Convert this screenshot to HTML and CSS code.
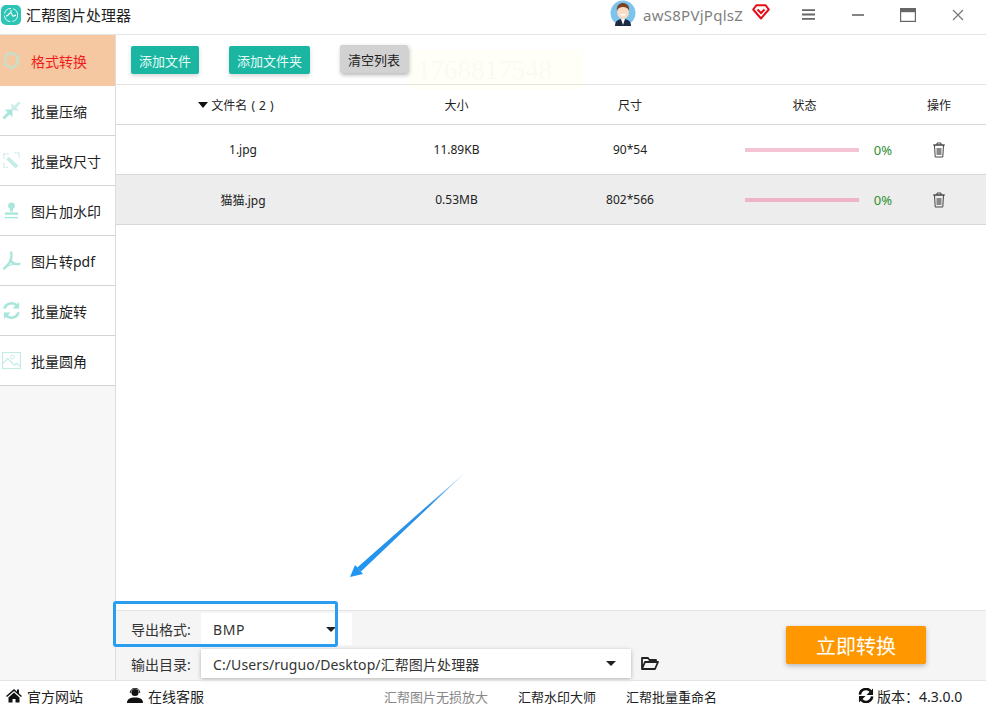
FILE: index.html
```html
<!DOCTYPE html>
<html lang="zh-CN">
<head>
<meta charset="utf-8">
<title>汇帮图片处理器</title>
<link rel="stylesheet" href="styles.css">
</head>
<body>
<div class="app">
  <header class="titlebar">
    <svg class="logo" viewBox="0 0 20 20"><rect width="20" height="20" rx="5" fill="#2cc4b4"/><circle cx="10" cy="10" r="6.6" fill="none" stroke="#e6fbf8" stroke-width="1" stroke-dasharray="9 2"/><path d="M5 11c3 0 3-4 5-3s0 5 5 2M10 5v3" fill="none" stroke="#fff" stroke-width="1.1"/></svg>
    <span class="app-name">汇帮图片处理器</span>
    <div class="title-right">
      <svg class="avatar" viewBox="0 0 26 26"><circle cx="13" cy="13" r="12.5" fill="#7cc4ee"/><path d="M5 26c0-5 3-7 8-7s8 2 8 7z" fill="#1d2a44"/><path d="M11 19h4l-2 6z" fill="#fff"/><ellipse cx="13" cy="12" rx="6" ry="7" fill="#fbdcc4"/><path d="M7 11c-1-6 3-8 6-8s7 2 6 8c-1-3-3-4-6-4s-5 1-6 4z" fill="#7a4526"/><path d="M10 14c1 2 5 2 6 0z" fill="#fff"/></svg>
      <span class="user-name">awS8PVjPqlsZ</span>
      <svg class="vip" viewBox="0 0 18 16"><path d="M4.500 1.200h9l3.300 4.300L9 14.500 1.200 5.500z" fill="none" stroke="#e60d18" stroke-width="2" stroke-linejoin="round"/><path d="M5.500 5.500 9 9l3.500-3.500" fill="none" stroke="#e60d18" stroke-width="2"/></svg>
      <svg class="win-menu" viewBox="0 0 13 11"><path d="M0 1.200h13M0 5.500h13M0 9.800h13" stroke="#666" stroke-width="1.800"/></svg>
      <svg class="win-min" viewBox="0 0 12 2"><path d="M0 1h12" stroke="#777" stroke-width="1.800"/></svg>
      <svg class="win-max" viewBox="0 0 16 14"><rect x=".6" y=".6" width="14.800" height="12.800" fill="none" stroke="#666" stroke-width="1.200"/><rect x=".6" y=".6" width="14.800" height="3.600" fill="#666"/></svg>
      <svg class="win-close" viewBox="0 0 12 12"><path d="M1 1l10 10M11 1 1 11" stroke="#777" stroke-width="1.200"/></svg>
    </div>
  </header>

  <div class="main">
    <nav class="sidebar">
      <div class="nav-item active">
        <svg class="nav-icon" viewBox="0 0 20 20"><path d="M4 4l6-2 7 4-1 8-6 4-7-4z" fill="none" stroke="#bfe3cf" stroke-width="3" stroke-dasharray="3 1"/></svg>
        <span>格式转换</span>
      </div>
      <div class="nav-item">
        <svg class="nav-icon" viewBox="0 0 20 20"><path d="M1.500 18.500l6-6" stroke="#a8e6dc" stroke-width="3"/><path d="M3 9h8v8z" fill="#a8e6dc"/><path d="M13 7l5.500-5.500" stroke="#cdeee8" stroke-width="3"/><path d="M10 2v8h8z" fill="#cdeee8"/></svg>
        <span>批量压缩</span>
      </div>
      <div class="nav-item">
        <svg class="nav-icon" viewBox="0 0 20 20"><path d="M7 6l10 9-2.500 3.500L4.500 9z" fill="#c4ece5"/><path d="M2 3h5M2 3v5M13 2h5v5M2 13v4h4" fill="none" stroke="#c4ece5" stroke-width="1.500" stroke-dasharray="2 1"/></svg>
        <span>批量改尺寸</span>
      </div>
      <div class="nav-item">
        <svg class="nav-icon" viewBox="0 0 20 20"><circle cx="10" cy="5" r="3.500" fill="#a8e6dc"/><path d="M8.500 7h3v4h-3zM3 12h14v2.500H3z" fill="#a8e6dc"/><path d="M3 17.500h14" stroke="#a8e6dc" stroke-width="1.500"/></svg>
        <span>图片加水印</span>
      </div>
      <div class="nav-item">
        <svg class="nav-icon" viewBox="0 0 20 20"><path d="M9.500 1.500c1.500 5 0 11-7.500 17M8.500 9.500c2.500 3.500 6 5 10 4" fill="none" stroke="#a8e6dc" stroke-width="2.400" stroke-linecap="round"/><path d="M3 18c3-3 10-5 15.500-4.500" fill="none" stroke="#a8e6dc" stroke-width="1.200"/></svg>
        <span>图片转pdf</span>
      </div>
      <div class="nav-item">
        <svg class="nav-icon" viewBox="0 0 20 20"><path d="M2.500 8A8 8 0 0 1 16 5M17.500 12A8 8 0 0 1 4 15" fill="none" stroke="#a8e6dc" stroke-width="2.800"/><path d="M18 1v7h-7zM2 19v-7h7z" fill="#a8e6dc"/></svg>
        <span>批量旋转</span>
      </div>
      <div class="nav-item">
        <svg class="nav-icon" viewBox="0 0 20 18"><rect x=".6" y=".6" width="18.800" height="16.800" fill="none" stroke="#c4ece5" stroke-width="1.200"/><circle cx="11" cy="5.500" r="2" fill="none" stroke="#c4ece5"/><path d="M1 12l5-5 7 7 2-2 4 3" fill="none" stroke="#c4ece5" stroke-width="1.200"/></svg>
        <span>批量圆角</span>
      </div>
    </nav>

    <section class="content">
      <div class="toolbar">
        <button class="btn btn-teal">添加文件</button>
        <button class="btn btn-teal">添加文件夹</button>
        <button class="btn btn-grey">清空列表</button>
      </div>
      <div class="row head">
        <div class="cell name-head"><span class="sort"></span>文件名 ( 2 )</div>
        <div class="cell">大小</div>
        <div class="cell">尺寸</div>
        <div class="cell">状态</div>
        <div class="cell">操作</div>
      </div>
      <div class="row">
        <div class="cell">1.jpg</div>
        <div class="cell">11.89KB</div>
        <div class="cell">90*54</div>
        <div class="cell status"><span class="bar"></span><span class="pct">0%</span></div>
        <div class="cell">
          <svg class="trash" viewBox="0 0 14 16"><path d="M1 3h12M5 3V1h4v2M2.500 3l.7 12h7.600l.7-12z" fill="none" stroke="#444" stroke-width="1"/><rect x="4.500" y="6" width="5" height="7" fill="#888"/></svg>
        </div>
      </div>
      <div class="row selected">
        <div class="cell">猫猫.jpg</div>
        <div class="cell">0.53MB</div>
        <div class="cell">802*566</div>
        <div class="cell status"><span class="bar"></span><span class="pct">0%</span></div>
        <div class="cell">
          <svg class="trash" viewBox="0 0 14 16"><path d="M1 3h12M5 3V1h4v2M2.500 3l.7 12h7.600l.7-12z" fill="none" stroke="#444" stroke-width="1"/><rect x="4.500" y="6" width="5" height="7" fill="#888"/></svg>
        </div>
      </div>
      <div class="spacer"></div>
      <div class="panel">
        <div class="options">
          <div class="field">
            <label class="field-label">导出格式:</label>
            <div class="select select-format"><span class="format-value">BMP</span><i class="caret"></i></div>
          </div>
          <div class="field">
            <label class="field-label">输出目录:</label>
            <div class="select select-path"><span class="path-value">C:/Users/ruguo/Desktop/汇帮图片处理器</span><i class="caret"></i></div>
            <svg class="folder" viewBox="0 0 18 15"><path d="M1 13V2h6l1.500 2H15v2M1 13l3-7h13l-3 7z" fill="none" stroke="#222" stroke-width="1.800" stroke-linejoin="round"/></svg>
          </div>
        </div>
        <button class="start">立即转换</button>
      </div>
    </section>
  </div>

  <footer class="footer">
    <div class="foot-link home">
      <svg class="foot-icon" viewBox="0 0 16 14"><path d="M8 .5 0 7.500l1 1L8 2.500l7 6 1-1-3-2.600V1h-2v2.200zM2.500 9v5h4v-3.500h3V14h4V9L8 4z" fill="#111"/></svg>
      <span>官方网站</span>
    </div>
    <div class="foot-link service">
      <svg class="foot-icon" viewBox="0 0 16 15"><circle cx="8" cy="4.500" r="3.600" fill="#111"/><path d="M3.200 5a4.800 4.800 0 0 1 9.600 0" fill="none" stroke="#111"/><path d="M0 15c0-4 3-5.500 8-5.500s8 1.500 8 5.500z" fill="#111"/></svg>
      <span>在线客服</span>
    </div>
    <span class="foot-text muted">汇帮图片无损放大</span>
    <span class="foot-text water">汇帮水印大师</span>
    <span class="foot-text rename">汇帮批量重命名</span>
    <div class="foot-link version">
      <svg class="foot-icon" viewBox="0 0 16 16"><path d="M1.500 7A6.500 6.500 0 0 1 13 3.500M14.500 9A6.500 6.500 0 0 1 3 12.500" fill="none" stroke="#111" stroke-width="2.800"/><path d="M15.500 .5V7.500H8.500zM.5 15.500V8.500h7z" fill="#111"/></svg>
      <span>版本：4.3.0.0</span>
    </div>
  </footer>

  <div class="watermark">1768817548</div>
  <div class="highlight"></div>
  <svg class="arrow" viewBox="0 0 130 120">
    <defs><linearGradient id="shaft" x1="1" y1="0" x2="0" y2="1"><stop offset="0" stop-color="#2d9cf0" stop-opacity=".1"/><stop offset=".35" stop-color="#2d8fe0"/><stop offset="1" stop-color="#2196f3"/></linearGradient></defs>
    <path d="M129 1 21 103.500 17.300 99.500z" fill="url(#shaft)"/>
    <path d="M10 109 15 97l2.500 2.500 3.500 4 2 2.500z" fill="#2196f3"/>
  </svg>
</div>
</body>
</html>
```

FILE: styles.css
```css
* { box-sizing: border-box; }
html, body { margin: 0; padding: 0; }
body {
  font-family: "Noto Sans", "Noto Sans CJK SC", sans-serif;
  font-size: 13px;
  color: #222;
  background: #fff;
}
.app {
  position: relative;
  width: 986px;
  height: 709px;
  display: flex;
  flex-direction: column;
  overflow: hidden;
}
.titlebar {
  height: 35px;
  flex: none;
  display: flex;
  align-items: center;
  padding: 0 22px 5px 1px;
  border-bottom: 1px solid #e4e4e4;
}
.logo { width: 20px; height: 20px; margin-right: 5px; }
.app-name { font-size: 15px; color: #222; }
.title-right { margin-left: auto; display: flex; align-items: center; }
.avatar { width: 26px; height: 26px; margin-right: 7px; margin-top: -3px; }
.user-name { font-size: 15px; color: #808080; width: 109px; letter-spacing: .27px; }
.vip { width: 18px; height: 16px; margin-top: -5px; }
.win-menu { width: 13px; height: 11px; margin-left: 32px; }
.win-min { width: 12px; height: 2px; margin-left: 37px; }
.win-max { width: 16px; height: 14px; margin-left: 36px; }
.win-close { width: 12px; height: 12px; margin-left: 36px; }

.main { flex: 1; display: flex; min-height: 0; }
.sidebar {
  width: 116px;
  flex: none;
  background: #f7f7f7;
  border-right: 1px solid #dcdcdc;
}
.nav-item {
  height: 50px;
  display: flex;
  align-items: center;
  gap: 10px;
  padding-left: 2px;
  background: #fff;
  border-bottom: 1px solid #d4d4d4;
  font-size: 14px;
  color: #222;
}
.nav-item.active {
  height: 51px;
  background: #f6c8a2;
  color: #ee1c1c;
  border-bottom: 0;
}
.nav-icon { width: 19px; height: 19px; flex: none; }

.content { flex: 1; min-width: 0; display: flex; flex-direction: column; }
.toolbar {
  height: 50px;
  flex: none;
  display: flex;
  align-items: flex-start;
  padding: 11px 0 0 15px;
  gap: 30px;
  border-bottom: 1px solid #e2e2e2;
}
.btn {
  height: 28px;
  padding: 0 8px;
  border: 0;
  border-radius: 2px;
  font-family: inherit;
  font-size: 13px;
  box-shadow: 0 2px 4px rgba(0, 0, 0, .16);
}
.btn-teal { background: #1ab6a2; color: #e8fbf7; }
.btn-grey { background: #d2d2d2; color: #222; margin-top: -1px; box-shadow: 1px 2px 4px rgba(0, 0, 0, .3); }

.row {
  height: 50px;
  flex: none;
  display: grid;
  grid-template-columns: 254px 173px 174px 175px 94px;
  align-items: center;
  border-bottom: 1px solid #d8d8d8;
  font-size: 12px;
  color: #222;
}
.row.head { height: 40px; }
.row.selected { background: #ededed; }
.cell { display: flex; justify-content: center; align-items: center; }
.name-head { padding-right: 14px; word-spacing: 1px; }
.sort {
  width: 0;
  height: 0;
  margin-right: 3px;
  border-left: 5px solid transparent;
  border-right: 5px solid transparent;
  border-top: 6px solid #111;
}
.status { justify-content: flex-start; padding-left: 28px; }
.bar { width: 114px; height: 4px; background: #f5c4d4; }
.selected .bar { background: #eeb4ca; }
.pct { margin-left: 15px; font-size: 13px; color: #2f8f2f; }
.trash { width: 14px; height: 16px; margin-left: -1px; }
.spacer { flex: 1; }

.panel {
  height: 70px;
  flex: none;
  display: flex;
  background: #f5f5f5;
  border-top: 1px solid #e4e4e4;
  padding: 2px 60px 0 15px;
}
.options { flex: 1; display: flex; flex-direction: column; gap: 4px; }
.field { display: flex; align-items: center; }
.field-label { width: 70px; font-size: 14px; color: #333; }
.select {
  display: flex;
  align-items: center;
  padding-left: 12px;
  background: #fff;
  font-size: 14px;
  color: #333;
}
.format-value { letter-spacing: .6px; }
.path-value { letter-spacing: .1px; }
.select-format { width: 151px; height: 32px; padding-right: 16px; justify-content: space-between; }
.select-path {
  width: 430px;
  height: 29px;
  padding-right: 15px;
  justify-content: space-between;
  box-shadow: 0 1px 4px rgba(0, 0, 0, .28);
}
.caret {
  width: 0;
  height: 0;
  border-left: 5px solid transparent;
  border-right: 5px solid transparent;
  border-top: 5px solid #222;
}
.folder { width: 18px; height: 15px; margin-left: 10px; }
.start {
  width: 140px;
  height: 38px;
  margin-top: 13px;
  border: 0;
  border-radius: 2px;
  background: #ff9800;
  color: #fff;
  font-family: inherit;
  font-size: 20px;
  box-shadow: 0 2px 5px rgba(0, 0, 0, .25);
}

.footer {
  height: 29px;
  flex: none;
  display: flex;
  align-items: center;
  padding: 2px 0 0 6px;
  border-top: 1px solid #e4e4e4;
  font-size: 14px;
  color: #222;
}
.foot-link { display: flex; align-items: center; gap: 5px; }
.foot-icon { width: 16px; height: 15px; flex: none; margin-top: -2px; }
.service { margin-left: 44px; }
.foot-text { font-size: 13px; }
.muted { margin-left: 180px; color: #888; }
.water { margin-left: 30px; }
.rename { margin-left: 30px; }
.version { margin-left: 141px; gap: 3px; }

.watermark {
  position: absolute;
  left: 410px;
  top: 50px;
  width: 172px;
  height: 40px;
  padding-left: 7px;
  background: rgba(255, 255, 190, .1);
  font-family: "Liberation Serif", serif;
  font-size: 27px;
  line-height: 40px;
  color: rgba(190, 190, 150, .08);
}
.highlight {
  position: absolute;
  left: 113px;
  top: 601px;
  width: 225px;
  height: 46px;
  border: 3px solid #2a9df0;
  border-radius: 3px;
}
.arrow {
  position: absolute;
  left: 340px;
  top: 468px;
  width: 130px;
  height: 120px;
}
```
